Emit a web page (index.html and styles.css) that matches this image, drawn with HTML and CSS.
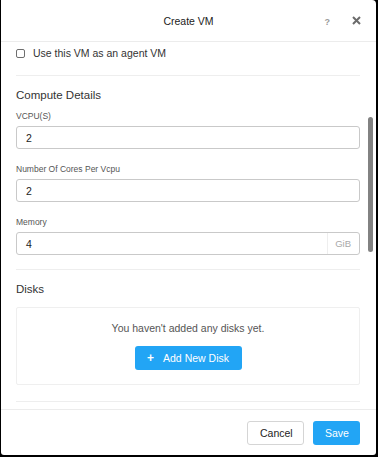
FILE: index.html
```html
<!DOCTYPE html>
<html lang="en">
<head>
    <meta charset="UTF-8">
    <meta name="viewport" content="width=device-width, initial-scale=1.0">
    <title>Create VM</title>
    <link rel="stylesheet" href="styles.css">
</head>
<body>

<div class="modal">
    <div class="modal-header">
        <span class="modal-title">Create VM</span>
        <span class="help">?</span>
        <svg class="close" width="9" height="9" viewBox="0 0 9 9">
            <path d="M1 1 L8 8 M8 1 L1 8" stroke="#6b6b6b" stroke-width="2" fill="none"/>
        </svg>
    </div>

    <div class="modal-body">
        <label class="check-row">
            <span class="checkbox"></span>
            Use this VM as an agent VM
        </label>

        <div class="divider"></div>

        <h3 class="section-title">Compute Details</h3>

        <div class="field">
            <div class="field-label">VCPU(S)</div>
            <div class="input"><span class="value">2</span></div>
        </div>
        <div class="field">
            <div class="field-label">Number Of Cores Per Vcpu</div>
            <div class="input"><span class="value">2</span></div>
        </div>
        <div class="field">
            <div class="field-label">Memory</div>
            <div class="input"><span class="value">4</span><span class="suffix">GiB</span></div>
        </div>

        <div class="divider divider-disks"></div>

        <h3 class="section-title">Disks</h3>

        <div class="empty-box">
            <div class="empty-text">You haven't added any disks yet.</div>
            <button class="btn btn-primary btn-add"><span class="plus">+</span>Add New Disk</button>
        </div>

        <div class="divider divider-end"></div>

        <div class="scrollbar"></div>
    </div>

    <div class="modal-footer">
        <button class="btn btn-default">Cancel</button>
        <button class="btn btn-primary">Save</button>
    </div>
</div>

</body>
</html>
```

FILE: styles.css
```css
body {
    margin: 0;
    padding: 0;
    background-color: #000;
    font-family: "Liberation Sans", Arial, sans-serif;
    color: #333;
}

.modal {
    position: relative;
    margin: 0 2px 0 1px;
    height: 455px;
    background-color: #fff;
    border-radius: 0 4px 3px 3px;
    display: flex;
    flex-direction: column;
    overflow: hidden;
}

.modal-header {
    position: relative;
    height: 41px;
    border-bottom: 1px solid #ececec;
    display: flex;
    align-items: center;
    justify-content: center;
    flex-shrink: 0;
}

.modal-title {
    font-size: 10.5px;
    color: #222;
    margin-top: 1px;
}

.help {
    position: absolute;
    right: 46px;
    top: 17px;
    font-size: 9px;
    font-weight: bold;
    color: #9a9a9a;
}

.close {
    position: absolute;
    right: 15px;
    top: 16px;
}

.modal-body {
    position: relative;
    flex: 1;
    padding: 1px 16px 0 15px;
}

.check-row {
    display: flex;
    align-items: center;
    gap: 8px;
    height: 20px;
    font-size: 10.5px;
    color: #333;
}

.checkbox {
    width: 7px;
    height: 7px;
    border: 1px solid #6e6e6e;
    border-radius: 2px;
}

.divider {
    height: 1px;
    background-color: #eeeeee;
    margin-top: 12px;
}

.section-title {
    margin: 11px 0 7px;
    font-size: 11.5px;
    font-weight: normal;
    line-height: 16px;
    color: #333;
}

.field {
    margin-bottom: 14px;
}

.field-label {
    font-size: 8.5px;
    line-height: 12px;
    color: #555;
    margin-bottom: 4px;
}

.input {
    height: 21px;
    border: 1px solid #c9c9c9;
    border-radius: 3px;
    display: flex;
    align-items: center;
    font-size: 10.5px;
    color: #222;
}

.value {
    flex: 1;
    padding-left: 9px;
}

.suffix {
    height: 100%;
    display: flex;
    align-items: center;
    padding: 0 8px 0 7px;
    border-left: 1px solid #eeeeee;
    color: #a8a8a8;
    font-size: 9.5px;
}

.divider-disks {
    margin-top: 1px;
}

.empty-box {
    margin-top: 10px;
    height: 76px;
    border: 1px solid #efefef;
    border-radius: 2px;
    display: flex;
    flex-direction: column;
    align-items: center;
}

.empty-text {
    margin-top: 14px;
    font-size: 10.5px;
    color: #555;
}

.divider-end {
    margin-top: 16px;
}

.btn {
    font-family: "Liberation Sans", Arial, sans-serif;
    font-size: 10.5px;
    height: 24px;
    border-radius: 3px;
    cursor: pointer;
    padding: 0 12px;
}

.btn-primary {
    background-color: #22a5f5;
    color: #fff;
    border: none;
}

.btn-default {
    background-color: #fff;
    color: #222;
    border: 1px solid #d5d5d5;
}

.btn-add {
    margin-top: 12px;
    width: 107px;
    padding: 0;
}

.plus {
    font-weight: bold;
    font-size: 12px;
    margin-right: 9px;
}

.scrollbar {
    position: absolute;
    right: 3px;
    top: 75px;
    width: 5px;
    height: 135px;
    border-radius: 3px;
    background-color: #828282;
}

.modal-footer {
    height: 45px;
    border-top: 1px solid #ececec;
    display: flex;
    align-items: center;
    justify-content: flex-end;
    gap: 9px;
    padding-right: 16px;
    flex-shrink: 0;
}

.modal-footer .btn-default {
    width: 57px;
    height: 24px;
}

.modal-footer .btn-primary {
    width: 47px;
    height: 24px;
}
```
